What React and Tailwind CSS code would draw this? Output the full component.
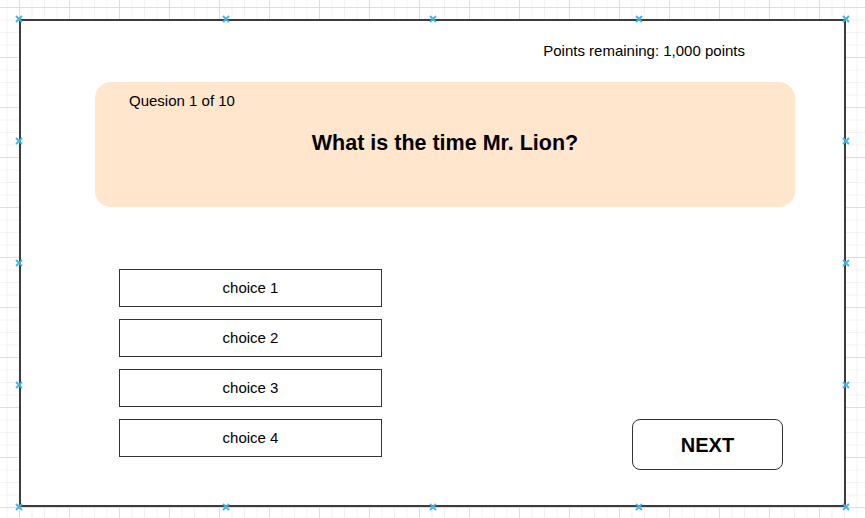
import React from "react";

const MARKERS = [
  "left-0 top-0",
  "left-1/4 top-0",
  "left-1/2 top-0",
  "left-3/4 top-0",
  "left-full top-0",
  "left-0 top-full",
  "left-1/4 top-full",
  "left-1/2 top-full",
  "left-3/4 top-full",
  "left-full top-full",
  "left-0 top-1/4",
  "left-0 top-1/2",
  "left-0 top-3/4",
  "left-full top-1/4",
  "left-full top-1/2",
  "left-full top-3/4",
];

const CHOICES = ["choice 1", "choice 2", "choice 3", "choice 4"];

const Marker = ({ pos }) => (
  <svg
    className={`absolute ${pos} -translate-x-1/2 -translate-y-1/2`}
    width="8"
    height="8"
    viewBox="0 0 8 8"
  >
    <path d="M1 1 L7 7 M7 1 L1 7" stroke="#40b4ea" strokeWidth="1.8" />
  </svg>
);

export default function App() {
  return (
    <div
      className="w-[865px] h-[518px] overflow-hidden bg-white pt-[19px] pl-[19px] font-['Liberation_Sans',Arial,sans-serif] text-black bg-[linear-gradient(to_right,#dedede_1px,transparent_1px),linear-gradient(to_bottom,#dedede_1px,transparent_1px),linear-gradient(to_right,#f2f2f2_1px,transparent_1px),linear-gradient(to_bottom,#f2f2f2_1px,transparent_1px)] [background-size:50px_50px,50px_50px,12.5px_12.5px,12.5px_12.5px] [background-position:19px_7px]"
    >
      <div className="relative w-[827px] h-[488px]">
        <div className="w-full h-full bg-white border-2 border-[#3c3c3c] flex flex-col">
          <div className="mt-[22px] mr-[99px] self-end text-[15px] leading-4">
            Points remaining: 1,000 points
          </div>

          <div className="mt-[23px] ml-[74px] w-[700px] h-[125px] rounded-[16px] bg-[#ffe6cc] flex flex-col">
            <div className="mt-[11px] ml-[34px] text-[15px] leading-4">
              Quesion 1 of 10
            </div>
            <div className="mt-[22px] text-center text-[21.5px] leading-6 font-bold">
              What is the time Mr. Lion?
            </div>
          </div>

          <div className="mt-[62px] ml-[98px] flex items-start">
            <div className="flex flex-col gap-[12px]">
              {CHOICES.map((c) => (
                <div
                  key={c}
                  className="w-[263px] h-[38px] border-[1.5px] border-[#333] flex items-center justify-center text-[15px]"
                >
                  {c}
                </div>
              ))}
            </div>
            <button className="ml-[250px] mt-[150px] w-[151px] h-[51px] rounded-[8px] border border-[#333] bg-white text-[20px] font-bold">
              NEXT
            </button>
          </div>
        </div>

        {MARKERS.map((m) => (
          <Marker key={m} pos={m} />
        ))}
      </div>
    </div>
  );
}
